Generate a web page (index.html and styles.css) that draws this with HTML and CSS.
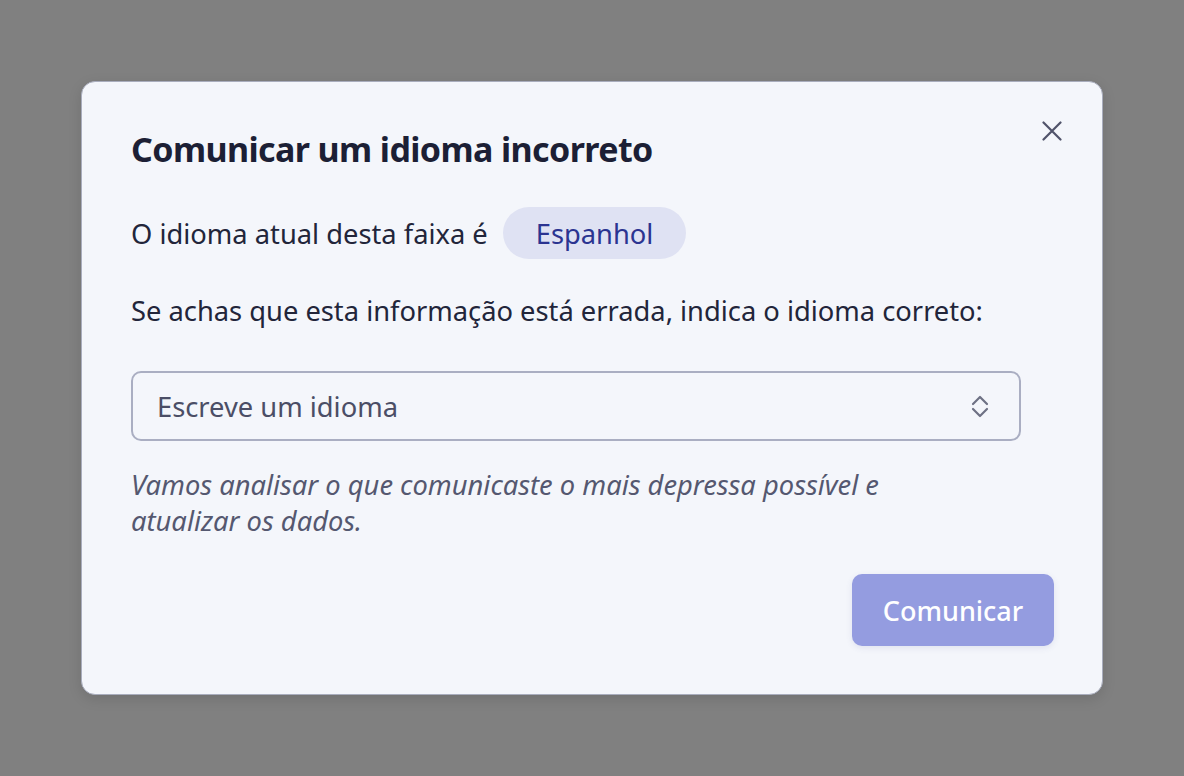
FILE: index.html
```html
<!DOCTYPE html>
<html lang="pt">
<head>
<meta charset="utf-8">
<title>Comunicar um idioma incorreto</title>
<link rel="stylesheet" href="styles.css">
</head>
<body>
<div class="overlay">
  <div class="modal" role="dialog" aria-labelledby="t">
    <button class="close" aria-label="Fechar">
      <svg width="20" height="20" viewBox="0 0 20 20"><path d="M1.5 1.5 L18.5 18.5 M18.5 1.5 L1.5 18.5" stroke="#50536a" stroke-width="2.2" stroke-linecap="round" fill="none"/></svg>
    </button>
    <h2 id="t" class="title">Comunicar um idioma incorreto</h2>
    <div class="current">
      <span>O idioma atual desta faixa é</span>
      <span class="pill">Espanhol</span>
    </div>
    <p class="ask">Se achas que esta informação está errada, indica o idioma correto:</p>
    <div class="select">
      <span class="placeholder">Escreve um idioma</span>
      <svg class="chev" width="18" height="27" viewBox="0 0 18 27"><path d="M2 11 L9 4 L16 11 M2 16 L9 23 L16 16" stroke="#6e7184" stroke-width="2.2" stroke-linecap="round" stroke-linejoin="round" fill="none"/></svg>
    </div>
    <p class="note">Vamos analisar o que comunicaste o mais depressa possível e atualizar os dados.</p>
    <div class="actions">
      <button class="submit">Comunicar</button>
    </div>
  </div>
</div>
</body>
</html>
```
FILE: styles.css
```css
html, body {
  margin: 0;
  height: 100%;
}
body {
  background: #808080;
  font-family: "Noto Sans", "Open Sans", sans-serif;
  font-stretch: semi-condensed;
}
.overlay {
  height: 100%;
  display: flex;
  align-items: center;
  justify-content: center;
}
.modal {
  position: relative;
  box-sizing: border-box;
  width: 1022px;
  background: #f4f6fb;
  border: 1.5px solid #a9adbd;
  border-radius: 14px;
  box-shadow: 0 4px 14px rgba(0,0,0,0.12);
  padding: 47px 48px 48px 49px;
  color: #22253a;
}
.close {
  position: absolute;
  top: 38px;
  right: 39px;
  width: 22px;
  height: 22px;
  padding: 0;
  border: 0;
  background: none;
  display: flex;
  align-items: center;
  justify-content: center;
}
.title {
  margin: 0;
  font-size: 34px;
  line-height: 40px;
  font-weight: 700;
  color: #1c1f35;
  letter-spacing: -0.6px;
}
.current {
  margin-top: 38px;
  display: flex;
  align-items: center;
  gap: 15px;
  font-size: 27.3px;
  height: 52px;
}
.pill {
  display: inline-flex;
  align-items: center;
  height: 52px;
  padding: 0 33px;
  border-radius: 26px;
  background: #dfe2f3;
  color: #2b3491;
}
.ask {
  margin: 34px 0 0;
  font-size: 27.3px;
  line-height: 36px;
}
.select {
  margin-top: 42px;
  box-sizing: border-box;
  width: 890px;
  height: 70px;
  border: 2px solid #aaaec2;
  border-radius: 10px;
  display: flex;
  align-items: center;
  justify-content: space-between;
  padding: 0 30px 0 24px;
}
.placeholder {
  font-size: 27.3px;
  color: #4b4e66;
}
.note {
  margin: 26px 0 0;
  font-size: 27.3px;
  line-height: 36px;
  font-style: italic;
  color: #555870;
  max-width: 860px;
}
.actions {
  margin-top: 35px;
  display: flex;
  justify-content: flex-end;
}
.submit {
  width: 202px;
  height: 72px;
  border: 0;
  border-radius: 10px;
  background: #949ce0;
  color: #ffffff;
  font-family: inherit;
  font-stretch: inherit;
  font-size: 27px;
  font-weight: 500;
  box-shadow: 0 2px 6px rgba(80,90,160,0.12);
}
```
